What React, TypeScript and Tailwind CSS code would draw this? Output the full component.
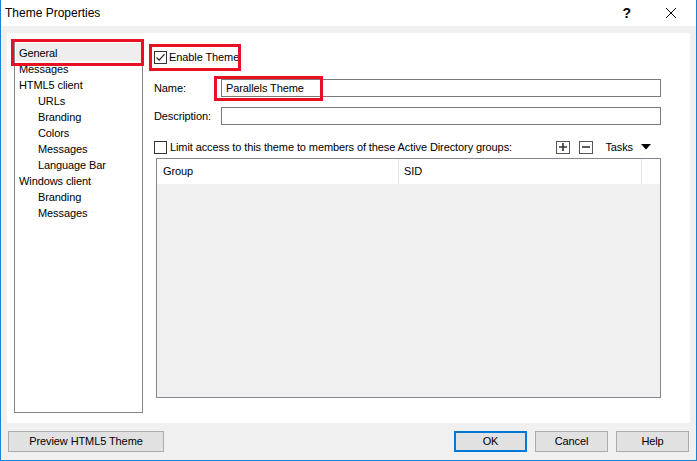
import React from "react";

const TREE: Array<{ label: string; level: number; selected?: boolean }> = [
  { label: "General", level: 0, selected: true },
  { label: "Messages", level: 0 },
  { label: "HTML5 client", level: 0 },
  { label: "URLs", level: 1 },
  { label: "Branding", level: 1 },
  { label: "Colors", level: 1 },
  { label: "Messages", level: 1 },
  { label: "Language Bar", level: 1 },
  { label: "Windows client", level: 0 },
  { label: "Branding", level: 1 },
  { label: "Messages", level: 1 },
];

function CheckBox({ checked }: { checked?: boolean }) {
  return (
    <span className="flex h-[13px] w-[13px] shrink-0 items-center justify-center border border-[#333] bg-white">
      {checked && (
        <svg width="11" height="11" viewBox="0 0 11 11">
          <path d="M1.5 5.5 L4.2 8.2 L9.5 2.2" fill="none" stroke="#222" strokeWidth="1.2" />
        </svg>
      )}
    </span>
  );
}

function RedBox({ className }: { className: string }) {
  return <span className={`pointer-events-none absolute border-[3px] border-[#e81123] ${className}`} />;
}

function Button({ children, primary, className }: { children: React.ReactNode; primary?: boolean; className: string }) {
  return (
    <button
      className={`flex h-[21px] items-center justify-center bg-[#e1e1e1] text-[11px] text-black ${
        primary ? "border-2 border-[#0078d7]" : "border border-[#adadad]"
      } ${className}`}
    >
      {children}
    </button>
  );
}

export default function App() {
  return (
    <div
      className="flex h-[461px] w-[697px] flex-col border-x border-b border-[#1883d7] bg-[#f0f0f0] text-[11px] tracking-[-0.1px] text-black"
      style={{ fontFamily: '"Liberation Sans", Arial, sans-serif' }}
    >
      {/* title bar */}
      <div className="flex h-[26px] shrink-0 items-center bg-white">
        <span className="ml-[4px] text-[12px] tracking-normal">Theme Properties</span>
        <span className="ml-auto mr-[34px] text-[14px] font-bold">?</span>
        <svg width="12" height="12" viewBox="0 0 12 12" className="mr-[19px]">
          <path d="M1 1 L11 11 M11 1 L1 11" stroke="#000" strokeWidth="1" />
        </svg>
      </div>

      {/* white content panel */}
      <div className="mx-[6px] mt-[7px] flex h-[390px] bg-white pl-[7px] pr-[29px] pt-[8px]">
        {/* tree */}
        <div className="relative h-[372px] w-[129px] shrink-0 border border-[#828790] pt-[1px]">
          <RedBox className="left-[-4px] top-[-3px] h-[27px] w-[133px]" />
          {TREE.map((t, i) => (
            <div
              key={i}
              className={
                t.selected
                  ? "mx-[1px] flex h-[18px] items-center bg-[#eeeeee] pl-[3px] pt-[2px]"
                  : `flex h-[16px] items-center ${t.level ? "pl-[23px]" : "pl-[4px]"}`
              }
            >
              {t.label}
            </div>
          ))}
        </div>

        {/* right side */}
        <div className="ml-[11px] flex flex-1 flex-col">
          <div className="relative mt-[10px] flex h-[13px] items-center gap-[2px]">
            <RedBox className="left-[-5px] top-[-7px] h-[27px] w-[92px]" />
            <CheckBox checked />
            <span>Enable Theme</span>
          </div>

          <div className="mt-[15px] flex h-[18px] items-center">
            <span className="w-[67px]">Name:</span>
            <div className="relative flex h-[18px] flex-1 items-center border border-[#7a7a7a] pl-[4px]">
              <RedBox className="left-[-8px] top-[-4px] h-[25px] w-[109px]" />
              Parallels Theme
            </div>
          </div>

          <div className="mt-[10px] flex h-[18px] items-center">
            <span className="w-[67px]">Description:</span>
            <div className="h-[18px] flex-1 border border-[#7a7a7a]" />
          </div>

          <div className="mt-[15px] flex h-[14px] items-center">
            <CheckBox />
            <span className="ml-[3px]">Limit access to this theme to members of these Active Directory groups:</span>
            <span className="ml-auto flex h-[13px] w-[14px] items-center justify-center border border-[#555]">
              <svg width="10" height="10" viewBox="0 0 10 10">
                <path d="M5 1 V9 M1 5 H9" stroke="#333" strokeWidth="1.6" />
              </svg>
            </span>
            <span className="ml-[9px] flex h-[13px] w-[14px] items-center justify-center border border-[#555]">
              <svg width="10" height="10" viewBox="0 0 10 10">
                <path d="M1 5 H9" stroke="#333" strokeWidth="1.6" />
              </svg>
            </span>
            <span className="ml-[12px]">Tasks</span>
            <svg width="10" height="6" viewBox="0 0 10 6" className="ml-[8px] mr-[10px]">
              <path d="M0 0 H10 L5 5.5 Z" fill="#000" />
            </svg>
          </div>

          <div className="ml-[2px] mt-[4px] flex h-[240px] flex-col border border-[#828790] bg-[#f0f0f0]">
            <div className="flex h-[25px] bg-white">
              <div className="flex w-[242px] items-center border-r border-[#e5e5e5] pl-[6px]">Group</div>
              <div className="flex w-[243px] items-center border-r border-[#e5e5e5] pl-[5px]">SID</div>
              <div className="flex-1" />
            </div>
          </div>
        </div>
      </div>

      {/* footer buttons */}
      <div className="mt-[8px] flex items-center pl-[7px]">
        <Button className="w-[156px]">Preview HTML5 Theme</Button>
        <Button primary className="ml-auto w-[73px]">
          OK
        </Button>
        <Button className="ml-[8px] w-[73px]">Cancel</Button>
        <Button className="ml-[8px] mr-[7px] w-[73px]">Help</Button>
      </div>
    </div>
  );
}
